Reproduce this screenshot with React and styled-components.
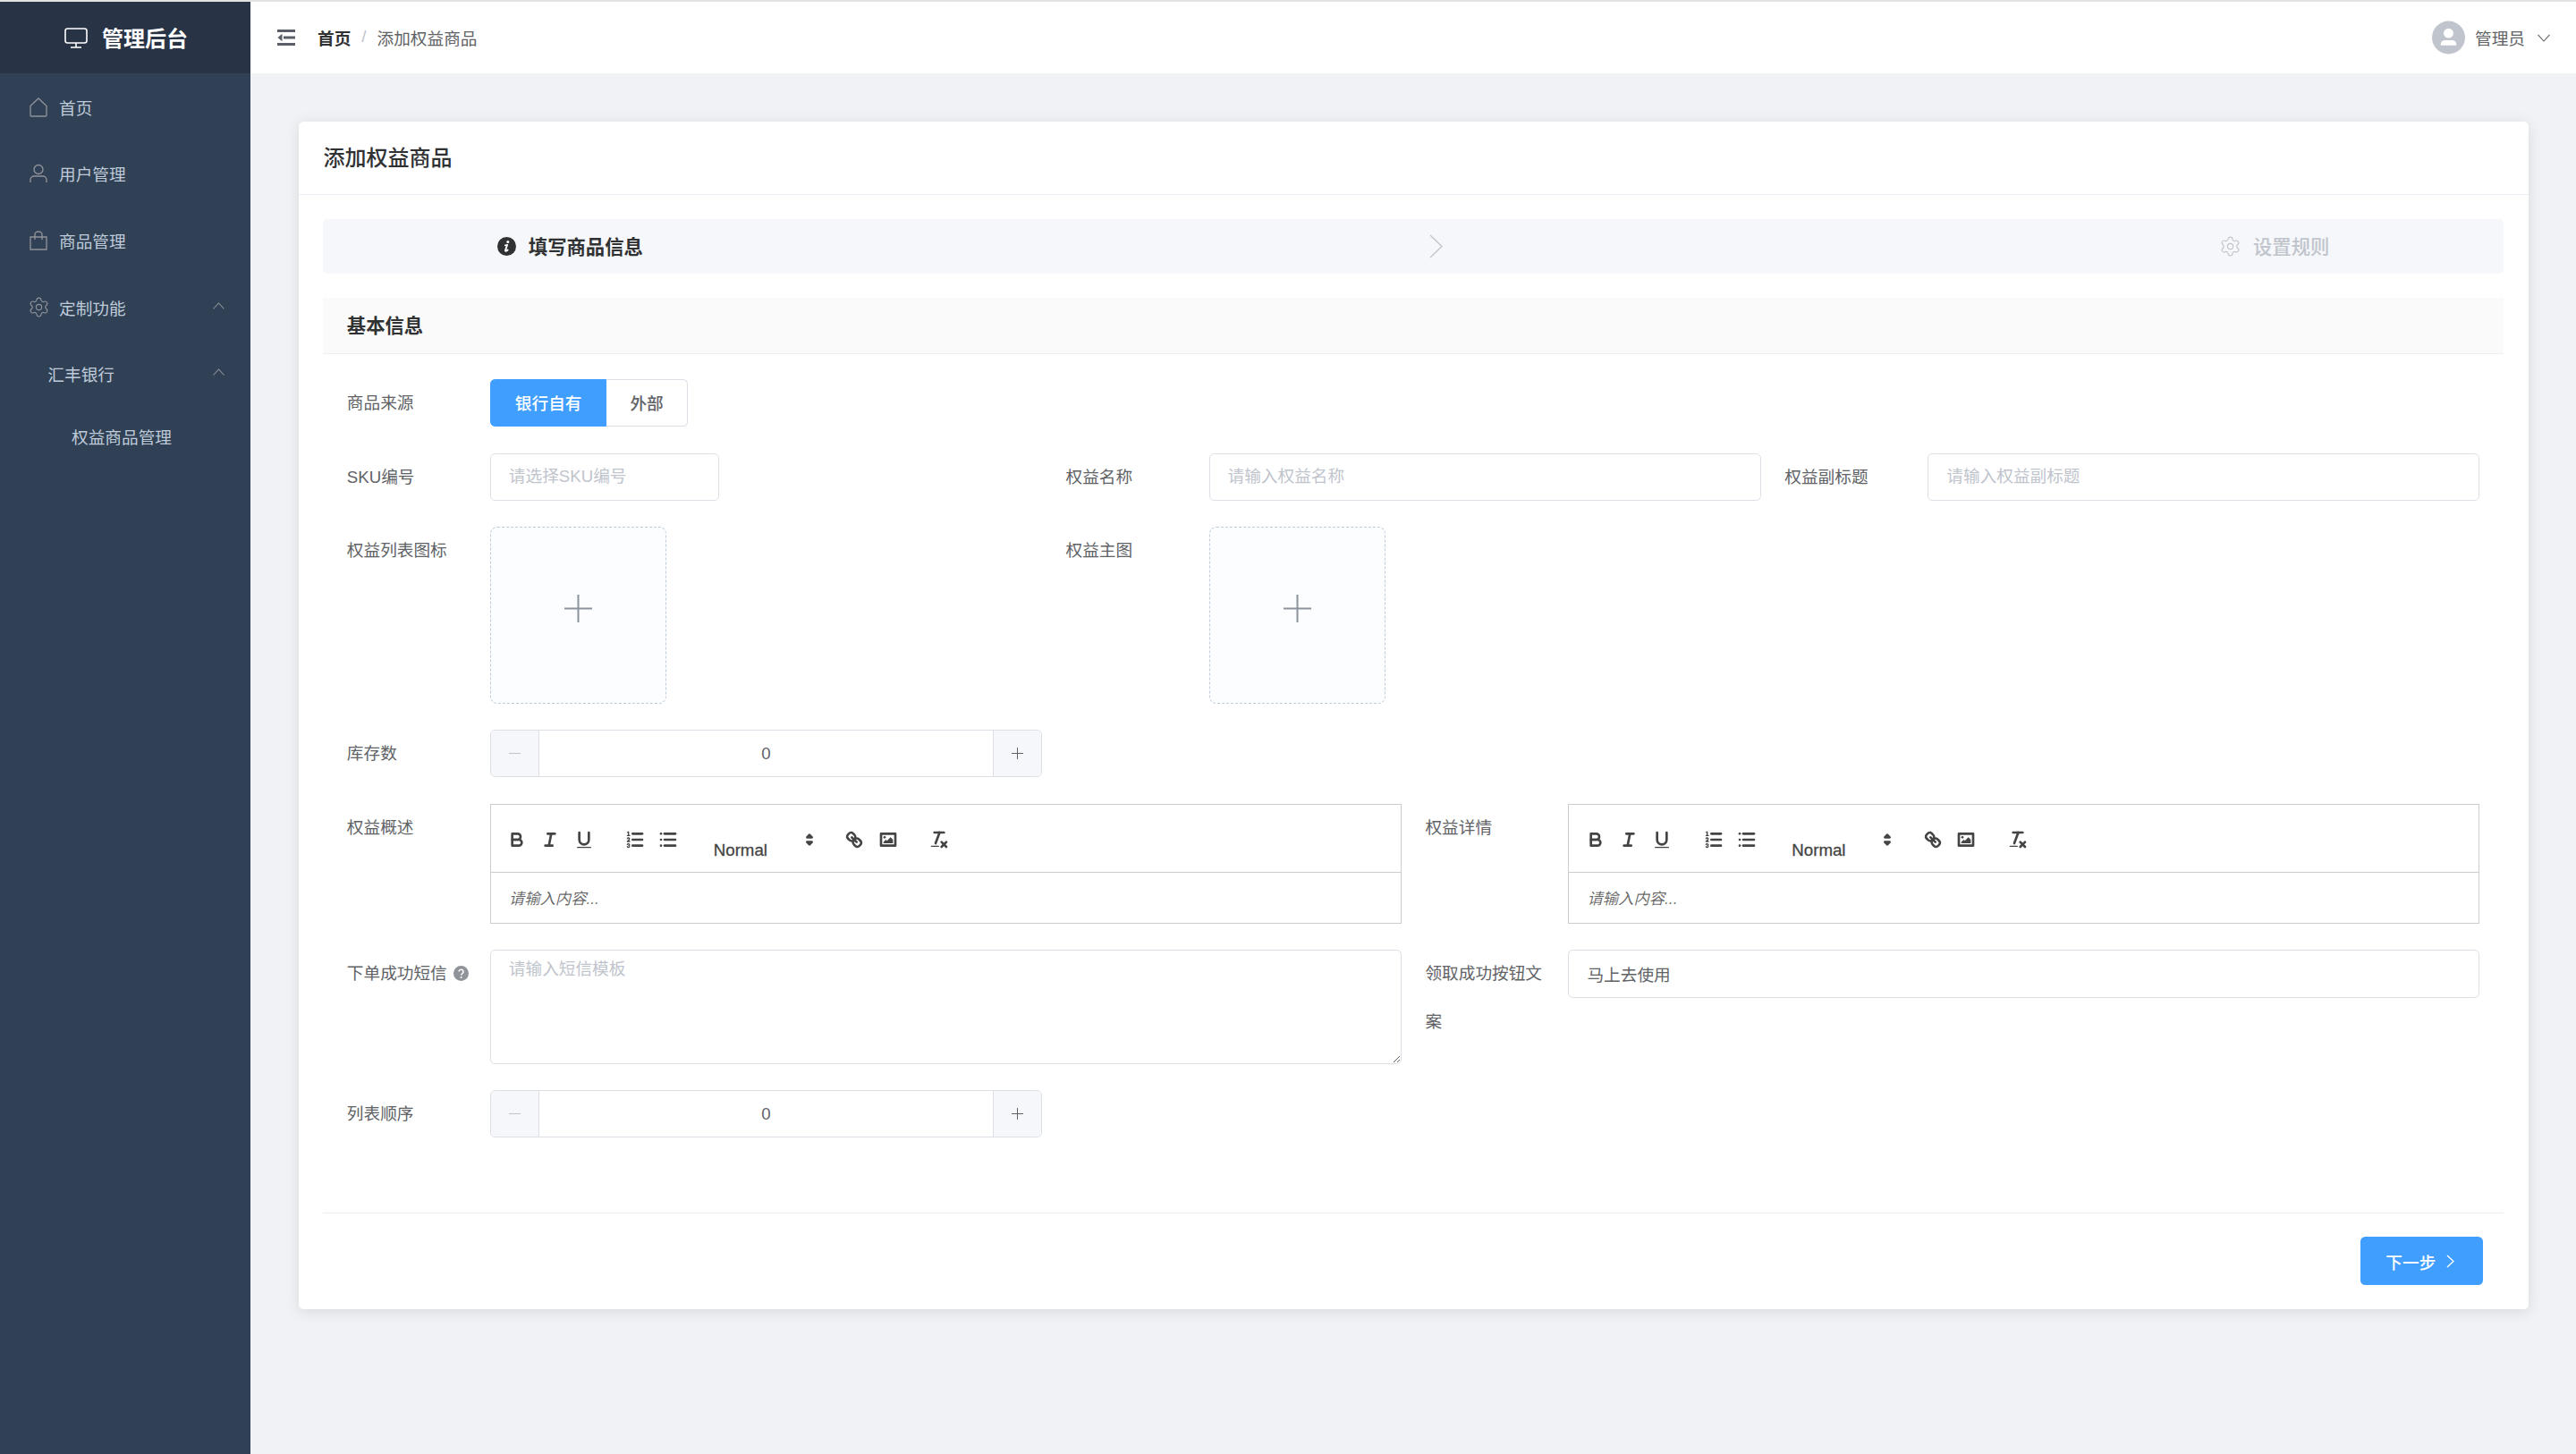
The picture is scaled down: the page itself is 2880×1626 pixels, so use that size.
import React from "react";
import styled, { createGlobalStyle } from "styled-components";
import { Settings } from "lucide-react";

const GlobalStyle = createGlobalStyle`
  html, body {
    margin: 0;
    padding: 0;
    background: #f0f2f6;
    font-family: "Liberation Sans", "Noto Sans CJK SC", sans-serif;
  }
  * {
    box-sizing: border-box;
  }
`;

const TopLine = styled.div`
  height: 2px;
  background: #e2e2e2;
`;

const Shell = styled.div`
  display: flex;
  min-height: 1624px;
`;

const Sidebar = styled.aside`
  flex: none;
  width: 280px;
  background: #304156;
`;

const Logo = styled.div`
  display: flex;
  align-items: center;
  height: 80px;
  padding-left: 72px;
  gap: 16px;
  background: #283446;
  color: #fff;
  font-size: 24px;
  font-weight: 700;
`;

const LogoText = styled.span`
  margin-top: -2px;
`;

const MenuItem = styled.div`
  display: flex;
  align-items: center;
  height: ${(p) => p.$height || 74.67}px;
  padding-left: ${(p) => p.$indent || 32}px;
  padding-right: 29px;
  padding-bottom: ${(p) => p.$lift || 0}px;
  color: #bfcbd9;
  font-size: 18.67px;
`;

const MenuIcon = styled.span`
  display: flex;
  flex: none;
  width: 34px;
  margin-top: 1px;
  padding-left: 1px;
  color: #909399;
`;

const MenuArrow = styled.svg`
  margin-left: auto;
  margin-top: -3px;
  width: 13px;
  height: 8px;
  fill: none;
  stroke: #909399;
  stroke-width: 1.1;
`;

const Main = styled.main`
  flex: 1;
  min-width: 0;
`;

const Header = styled.header`
  display: flex;
  align-items: center;
  height: 80px;
  padding: 0 29px 0 30px;
  background: #fff;
`;

const Breadcrumb = styled.nav`
  display: flex;
  align-items: center;
  margin-left: 25px;
  margin-top: -2px;
  font-size: 18.67px;
  color: #606266;
`;

const Crumb = styled.span`
  font-weight: 700;
  color: #303133;
`;

const CrumbSlash = styled.span`
  margin: 0 12px;
  color: #c0c4cc;
`;

const UserBox = styled.div`
  display: flex;
  align-items: center;
  margin-left: auto;
  font-size: 18.67px;
  color: #606266;
`;

const UserName = styled.span`
  margin-top: -2px;
`;

const UserArrow = styled.svg`
  margin-left: 14px;
  width: 14px;
  height: 9px;
  fill: none;
  stroke: #606266;
  stroke-width: 1.1;
`;

const Avatar = styled.svg`
  flex: none;
  width: 37px;
  height: 38px;
  margin-right: 11px;
`;

const Content = styled.div`
  padding: 54px 53.33px 0 53.5px;
`;

const Card = styled.section`
  background: #fff;
  border-radius: 5.33px;
  box-shadow: 0 2.67px 16px rgba(0, 0, 0, 0.1);
`;

const CardHead = styled.div`
  display: flex;
  align-items: center;
  height: 82px;
  padding: 0 0 5px 28px;
  border-bottom: 1.33px solid #ebeef5;
  font-size: 24px;
  font-weight: 500;
  color: #303133;
`;

const CardBody = styled.div`
  padding: 27px 27.33px 27.5px 27.33px;
`;

const Steps = styled.div`
  display: flex;
  align-items: center;
  height: 61px;
  padding: 0 195px;
  background: #f5f7fa;
  border-radius: 5.33px;
`;

const Step = styled.div`
  display: flex;
  align-items: center;
  gap: ${(p) => (p.$muted ? 13 : 14)}px;
  font-size: 21.33px;
  font-weight: ${(p) => (p.$muted ? 500 : 700)};
  color: ${(p) => (p.$muted ? "#c0c4cc" : "#303133")};
`;

const StepText = styled.span`
  margin-top: -3px;
`;

const StepArrow = styled.div`
  display: flex;
  flex: 1;
  justify-content: center;
  padding-left: 11px;
`;

const StepArrowIcon = styled.svg`
  width: 15px;
  height: 27px;
  fill: none;
  stroke: #c0c4cc;
  stroke-width: 1.33;
`;

const SectionBar = styled.div`
  display: flex;
  align-items: center;
  height: 63px;
  margin-top: 27px;
  padding: 0 0 3px 27px;
  background: #fafafa;
  border-bottom: 1.33px solid #ebeef5;
  font-size: 21.33px;
  font-weight: 700;
  color: #303133;
`;

const Form = styled.form`
  display: flex;
  flex-direction: column;
  gap: 29.33px;
  padding: 28px 27px 0;
`;

const Row = styled.div`
  display: grid;
  grid-template-columns: repeat(${(p) => p.$cols || 3}, 1fr);
  gap: 26.67px;
`;

const Item = styled.div`
  display: flex;
  min-width: 0;
`;

const Label = styled.label`
  flex: none;
  width: 160px;
  padding-right: 16px;
  font-size: 18.67px;
  line-height: 53.33px;
  color: #606266;
`;

const Control = styled.div`
  flex: 1;
  min-width: 0;
`;

const RadioGroup = styled.div`
  display: inline-flex;
  height: 53.33px;
`;

const RadioButton = styled.div`
  display: flex;
  align-items: center;
  padding: 0 ${(p) => (p.$active ? 27 : 26)}px 2px;
  font-size: 18.67px;
  font-weight: 500;
  color: ${(p) => (p.$active ? "#fff" : "#606266")};
  background: ${(p) => (p.$active ? "#409eff" : "#fff")};
  border: 1.33px solid ${(p) => (p.$active ? "#409eff" : "#dcdfe6")};
  border-left-width: ${(p) => (p.$active ? 1.33 : 0)}px;
  border-radius: ${(p) => (p.$active ? "5.33px 0 0 5.33px" : "0 5.33px 5.33px 0")};
`;

const TextInput = styled.input`
  display: block;
  width: ${(p) => p.$width || "100%"};
  height: 53.33px;
  padding: 0 20px 1px;
  border: 1.33px solid #dcdfe6;
  border-radius: 5.33px;
  outline: none;
  font-family: inherit;
  font-size: 18.67px;
  color: #606266;
  &::placeholder {
    color: #c0c4cc;
  }
`;

const TextArea = styled.textarea`
  display: block;
  width: 100%;
  height: 127.5px;
  padding: 6.67px 20px;
  border: 1.33px solid #dcdfe6;
  border-radius: 5.33px;
  outline: none;
  font-family: inherit;
  font-size: 18.67px;
  line-height: 1.5;
  color: #606266;
  resize: vertical;
  &::placeholder {
    color: #c0c4cc;
  }
`;

const Upload = styled.div`
  display: flex;
  justify-content: center;
  width: 197.33px;
  height: 197.33px;
  padding-top: 75px;
  background: #fbfdff;
  border: 1.33px dashed #c0ccda;
  border-radius: 8px;
`;

const PlusIcon = styled.svg`
  width: 31px;
  height: 31px;
  stroke: #8c939d;
  stroke-width: 2;
  fill: none;
`;

const NumberBox = styled.div`
  display: flex;
  height: 53.33px;
  border: 1.33px solid #dcdfe6;
  border-radius: 5.33px;
  overflow: hidden;
`;

const NumberButton = styled.div`
  display: flex;
  flex: none;
  align-items: center;
  justify-content: center;
  width: 54px;
  background: #f5f7fa;
  border-${(p) => (p.$side === "left" ? "right" : "left")}: 1.33px solid #dcdfe6;
  color: ${(p) => (p.$disabled ? "#c0c4cc" : "#606266")};
`;

const NumberGlyph = styled.svg`
  width: 17px;
  height: 17px;
  stroke: currentColor;
  stroke-width: 1;
  fill: none;
`;

const NumberInput = styled.input`
  flex: 1;
  min-width: 0;
  border: 0;
  outline: none;
  text-align: center;
  font-family: inherit;
  font-size: 18.67px;
  color: #606266;
`;

const EditorBox = styled.div`
  height: 134.33px;
  border: 1.33px solid #ccc;
`;

const Toolbar = styled.div`
  display: flex;
  align-items: flex-start;
  height: 76px;
  padding: 23px 10.67px 0;
  border-bottom: 1.33px solid #ccc;
`;

const ToolGroup = styled.div`
  display: flex;
  margin-right: 20px;
`;

const ToolButton = styled.span`
  display: flex;
  align-items: center;
  justify-content: center;
  width: 37.33px;
  height: 32px;
`;

const QuillIcon = styled.svg`
  width: 24px;
  height: 24px;
  fill: none;
  stroke: #444;
  stroke-width: 2;
  stroke-linecap: round;
  stroke-linejoin: round;
  .thin {
    stroke-width: 1;
  }
  .solid {
    fill: #444;
    stroke: none;
  }
  .even {
    fill: #444;
    stroke: none;
    fill-rule: evenodd;
  }
`;

const Picker = styled.div`
  display: flex;
  justify-content: space-between;
  width: 130.67px;
  height: 32px;
  margin-right: 20px;
  color: #444;
  font-size: 18.67px;
  -webkit-text-stroke: 0.3px #444;
`;

const PickerLabel = styled.span`
  padding: 15px 0 0 11.67px;
  line-height: 26px;
`;

const PickerArrow = styled(QuillIcon)`
  margin-top: 4px;
`;

const EditorBody = styled.div`
  display: flex;
  align-items: center;
  height: 55px;
  padding-left: 20px;
  font-size: 17.33px;
  font-style: italic;
  color: rgba(0, 0, 0, 0.6);
`;

const HelpIcon = styled.svg`
  width: 17px;
  height: 17px;
  margin-left: 7px;
  vertical-align: -2px;
`;

const CardFoot = styled.div`
  display: flex;
  justify-content: flex-end;
  margin-top: 83.33px;
  padding: 26.67px 23px 0 0;
  border-top: 1.33px solid #ebeef5;
`;

const NextButton = styled.button`
  display: flex;
  align-items: center;
  gap: 12px;
  width: 137px;
  height: 53.33px;
  padding: 0 0 0 28px;
  background: #409eff;
  border: 0;
  border-radius: 5.33px;
  color: #fff;
  font-family: inherit;
  font-size: 18.67px;
  font-weight: 500;
`;

const NextArrow = styled.svg`
  width: 9px;
  height: 15px;
  fill: none;
  stroke: #fff;
  stroke-width: 1.33;
`;

const HouseIcon = () => (
  <svg width="20" height="22" viewBox="0 0 20 22" fill="none" stroke="currentColor" strokeWidth="1.33">
    <path d="M1 9.5 L10 1 L19 9.5 V20 a1 1 0 0 1 -1 1 H2 a1 1 0 0 1 -1 -1 Z" />
  </svg>
);

const UserIcon = () => (
  <svg width="20" height="22" viewBox="0 0 20 22" fill="none" stroke="currentColor" strokeWidth="1.33">
    <circle cx="10" cy="6.5" r="5" />
    <path d="M1 21 V18 a4 4 0 0 1 4 -4 H15 a4 4 0 0 1 4 4 V21" />
  </svg>
);

const BagIcon = () => (
  <svg width="20" height="22" viewBox="0 0 20 22" fill="none" stroke="currentColor" strokeWidth="1.33">
    <path d="M1 7 H19 V21 H1 Z" />
    <path d="M6 10 V4 a4 3 0 0 1 8 0 V10" />
  </svg>
);

const MonitorIcon = () => (
  <svg width="26" height="23" viewBox="0 0 26 23" fill="none" stroke="#fff" strokeWidth="1.6">
    <rect x="1" y="1" width="24" height="16" rx="2.5" />
    <path d="M13 17 V22 M7 22 H19" />
  </svg>
);

const FoldIcon = () => (
  <svg width="20" height="18" viewBox="0 0 20 18" fill="#5a5e66">
    <rect width="20" height="3" />
    <rect y="15" width="20" height="3" />
    <rect x="7" y="7.5" width="13" height="3" />
    <path d="M5.5 4.8 V13.2 L0.5 9 Z" />
  </svg>
);

const InfoIcon = () => (
  <svg width="21" height="21" viewBox="0 0 21 21">
    <circle cx="10.5" cy="10.5" r="10.5" fill="#303133" />
    <circle cx="11.8" cy="5.6" r="1.5" fill="#fff" />
    <path d="M11 9 L9 15 Q8.8 16 10 15.6 L11.6 14.6" fill="none" stroke="#fff" strokeWidth="1.9" strokeLinecap="round" />
    <path d="M8.8 9.4 L11 9" fill="none" stroke="#fff" strokeWidth="1.6" strokeLinecap="round" />
  </svg>
);

const ToolIcons = {
  bold: (
    <>
      <path d="M5,4H9.5A2.5,2.5,0,0,1,12,6.5v0A2.5,2.5,0,0,1,9.5,9H5A0,0,0,0,1,5,9V4A0,0,0,0,1,5,4Z" />
      <path d="M5,9h5.5A2.5,2.5,0,0,1,13,11.5v0A2.5,2.5,0,0,1,10.5,14H5a0,0,0,0,1,0,0V9A0,0,0,0,1,5,9Z" />
    </>
  ),
  italic: (
    <>
      <line x1="7" x2="13" y1="4" y2="4" />
      <line x1="5" x2="11" y1="14" y2="14" />
      <line x1="8" x2="10" y1="14" y2="4" />
    </>
  ),
  underline: (
    <>
      <path d="M5,3V9a4.012,4.012,0,0,0,4,4H9a4.012,4.012,0,0,0,4-4V3" />
      <rect className="solid" height="1" rx="0.5" ry="0.5" width="12" x="3" y="15" />
    </>
  ),
  ordered: (
    <>
      <line x1="7" x2="15" y1="4" y2="4" />
      <line x1="7" x2="15" y1="9" y2="9" />
      <line x1="7" x2="15" y1="14" y2="14" />
      <line className="thin" x1="2.5" x2="4.5" y1="5.5" y2="5.5" />
      <path className="solid" d="M3.5,6A0.5,0.5,0,0,1,3,5.5V3.085l-0.276.138A0.5,0.5,0,0,1,2.053,3c-0.124-.247-0.023-0.324.224-0.447l1-.5A0.5,0.5,0,0,1,4,2.5v3A0.5,0.5,0,0,1,3.5,6Z" />
      <path className="thin" d="M4.5,10.5h-2c0-.234,1.85-1.076,1.85-2.234A0.959,0.959,0,0,0,2.5,8.156" />
      <path className="thin" d="M2.5,14.846a0.959,0.959,0,0,0,1.85-.109A0.7,0.7,0,0,0,3.75,14a0.688,0.688,0,0,0,.6-0.736,0.959,0.959,0,0,0-1.85-.109" />
    </>
  ),
  bullet: (
    <>
      <line x1="6" x2="15" y1="4" y2="4" />
      <line x1="6" x2="15" y1="9" y2="9" />
      <line x1="6" x2="15" y1="14" y2="14" />
      <line x1="3" x2="3" y1="4" y2="4" />
      <line x1="3" x2="3" y1="9" y2="9" />
      <line x1="3" x2="3" y1="14" y2="14" />
    </>
  ),
  link: (
    <>
      <line x1="7" x2="11" y1="7" y2="11" />
      <path d="M8.9,4.577a3.476,3.476,0,0,1,.36,4.679A3.476,3.476,0,0,1,4.577,8.9C3.185,7.5,2.035,6.4,4.217,4.217S7.5,3.185,8.9,4.577Z" />
      <path d="M13.423,9.1a3.476,3.476,0,0,0-4.679-.36,3.476,3.476,0,0,0,.36,4.679c1.392,1.392,2.5,2.542,4.679.36S14.815,10.5,13.423,9.1Z" />
    </>
  ),
  image: (
    <>
      <rect height="10" width="12" x="3" y="4" />
      <circle className="solid" cx="6" cy="7" r="1" />
      <polygon className="even" points="5 12 5 11 7 9 8 10 11 7 13 9 13 12 5 12" />
    </>
  ),
  clean: (
    <>
      <line x1="5" x2="13" y1="3" y2="3" />
      <line x1="6" x2="9.35" y1="12" y2="3" />
      <line x1="11" x2="15" y1="11" y2="15" />
      <line x1="15" x2="11" y1="11" y2="15" />
      <rect className="solid" height="1" rx="0.5" ry="0.5" width="7" x="2" y="14" />
    </>
  ),
};

function Tool({ name }) {
  return (
    <ToolButton>
      <QuillIcon viewBox="0 0 18 18">{ToolIcons[name]}</QuillIcon>
    </ToolButton>
  );
}

function Editor() {
  return (
    <EditorBox>
      <Toolbar>
        <ToolGroup>
          <Tool name="bold" />
          <Tool name="italic" />
          <Tool name="underline" />
        </ToolGroup>
        <ToolGroup>
          <Tool name="ordered" />
          <Tool name="bullet" />
        </ToolGroup>
        <Picker>
          <PickerLabel>Normal</PickerLabel>
          <PickerArrow viewBox="0 0 18 18">
            <polygon points="7 11 9 13 11 11 7 11" />
            <polygon points="7 7 9 5 11 7 7 7" />
          </PickerArrow>
        </Picker>
        <ToolGroup>
          <Tool name="link" />
          <Tool name="image" />
        </ToolGroup>
        <ToolGroup>
          <Tool name="clean" />
        </ToolGroup>
      </Toolbar>
      <EditorBody>请输入内容...</EditorBody>
    </EditorBox>
  );
}

function NumberField() {
  return (
    <NumberBox>
      <NumberButton $side="left" $disabled>
        <NumberGlyph viewBox="0 0 17 17">
          <path d="M2 8.5 H15" />
        </NumberGlyph>
      </NumberButton>
      <NumberInput defaultValue="0" />
      <NumberButton $side="right">
        <NumberGlyph viewBox="0 0 17 17">
          <path d="M2 8.5 H15 M8.5 2 V15" />
        </NumberGlyph>
      </NumberButton>
    </NumberBox>
  );
}

function UploadBox() {
  return (
    <Upload>
      <PlusIcon viewBox="0 0 31 31">
        <path d="M0 15.5 H31 M15.5 0 V31" />
      </PlusIcon>
    </Upload>
  );
}

function Field({ label, children }) {
  return (
    <Item>
      <Label>{label}</Label>
      <Control>{children}</Control>
    </Item>
  );
}

const ChevronUp = () => (
  <MenuArrow viewBox="0 0 13 8">
    <path d="M0.5 7.5 L6.5 1 L12.5 7.5" />
  </MenuArrow>
);

export default function App() {
  return (
    <>
      <GlobalStyle />
      <TopLine />
      <Shell>
        <Sidebar>
          <Logo>
            <MonitorIcon />
            <LogoText>管理后台</LogoText>
          </Logo>
          <MenuItem>
            <MenuIcon>
              <HouseIcon />
            </MenuIcon>
            首页
          </MenuItem>
          <MenuItem>
            <MenuIcon>
              <UserIcon />
            </MenuIcon>
            用户管理
          </MenuItem>
          <MenuItem>
            <MenuIcon>
              <BagIcon />
            </MenuIcon>
            商品管理
          </MenuItem>
          <MenuItem>
            <MenuIcon>
              <Settings size={25} strokeWidth={1.1} style={{ marginLeft: -2 }} />
            </MenuIcon>
            定制功能
            <ChevronUp />
          </MenuItem>
          <MenuItem $indent={53.33}>
            汇丰银行
            <ChevronUp />
          </MenuItem>
          <MenuItem $indent={80} $height={66.67} $lift={3}>
            权益商品管理
          </MenuItem>
        </Sidebar>
        <Main>
          <Header>
            <FoldIcon />
            <Breadcrumb>
              <Crumb>首页</Crumb>
              <CrumbSlash>/</CrumbSlash>
              添加权益商品
            </Breadcrumb>
            <UserBox>
              <Avatar viewBox="0 0 38 38">
                <circle cx="19" cy="19" r="19" fill="#c0c4cc" />
                <circle cx="19" cy="14" r="5.6" fill="#fff" />
                <path d="M10 27 a5 5 0 0 1 5 -5 h8 a5 5 0 0 1 5 5 v1 h-18 Z" fill="#fff" />
              </Avatar>
              <UserName>管理员</UserName>
              <UserArrow viewBox="0 0 14 9">
                <path d="M0.5 0.8 L7 8 L13.5 0.8" />
              </UserArrow>
            </UserBox>
          </Header>
          <Content>
            <Card>
              <CardHead>添加权益商品</CardHead>
              <CardBody>
                <Steps>
                  <Step>
                    <InfoIcon />
                    <StepText>填写商品信息</StepText>
                  </Step>
                  <StepArrow>
                    <StepArrowIcon viewBox="0 0 15 27">
                      <path d="M1 1 L14 13.5 L1 26" />
                    </StepArrowIcon>
                  </StepArrow>
                  <Step $muted>
                    <Settings size={25} strokeWidth={1.1} />
                    <StepText>设置规则</StepText>
                  </Step>
                </Steps>
                <SectionBar>基本信息</SectionBar>
                <Form>
                  <Row $cols={1}>
                    <Field label="商品来源">
                      <RadioGroup>
                        <RadioButton $active>银行自有</RadioButton>
                        <RadioButton>外部</RadioButton>
                      </RadioGroup>
                    </Field>
                  </Row>
                  <Row>
                    <Field label="SKU编号">
                      <TextInput $width="256px" placeholder="请选择SKU编号" />
                    </Field>
                    <Field label="权益名称">
                      <TextInput placeholder="请输入权益名称" />
                    </Field>
                    <Field label="权益副标题">
                      <TextInput placeholder="请输入权益副标题" />
                    </Field>
                  </Row>
                  <Row>
                    <Field label="权益列表图标">
                      <UploadBox />
                    </Field>
                    <Field label="权益主图">
                      <UploadBox />
                    </Field>
                  </Row>
                  <Row>
                    <Field label="库存数">
                      <NumberField />
                    </Field>
                  </Row>
                  <Row $cols={2}>
                    <Field label="权益概述">
                      <Editor />
                    </Field>
                    <Field label="权益详情">
                      <Editor />
                    </Field>
                  </Row>
                  <Row $cols={2}>
                    <Field
                      label={
                        <>
                          下单成功短信
                          <HelpIcon viewBox="0 0 17 17">
                            <circle cx="8.5" cy="8.5" r="8.5" fill="#909399" />
                            <path d="M6 6.6 a2.5 2.4 0 1 1 3.9 2 q-1.3 .8 -1.3 1.9" fill="none" stroke="#fff" strokeWidth="1.5" />
                            <circle cx="8.6" cy="13" r="1" fill="#fff" />
                          </HelpIcon>
                        </>
                      }
                    >
                      <TextArea placeholder="请输入短信模板" />
                    </Field>
                    <Field label="领取成功按钮文案">
                      <TextInput defaultValue="马上去使用" />
                    </Field>
                  </Row>
                  <Row>
                    <Field label="列表顺序">
                      <NumberField />
                    </Field>
                  </Row>
                </Form>
                <CardFoot>
                  <NextButton type="button">
                    下一步
                    <NextArrow viewBox="0 0 9 15">
                      <path d="M1 1 L8 7.5 L1 14" />
                    </NextArrow>
                  </NextButton>
                </CardFoot>
              </CardBody>
            </Card>
          </Content>
        </Main>
      </Shell>
    </>
  );
}
